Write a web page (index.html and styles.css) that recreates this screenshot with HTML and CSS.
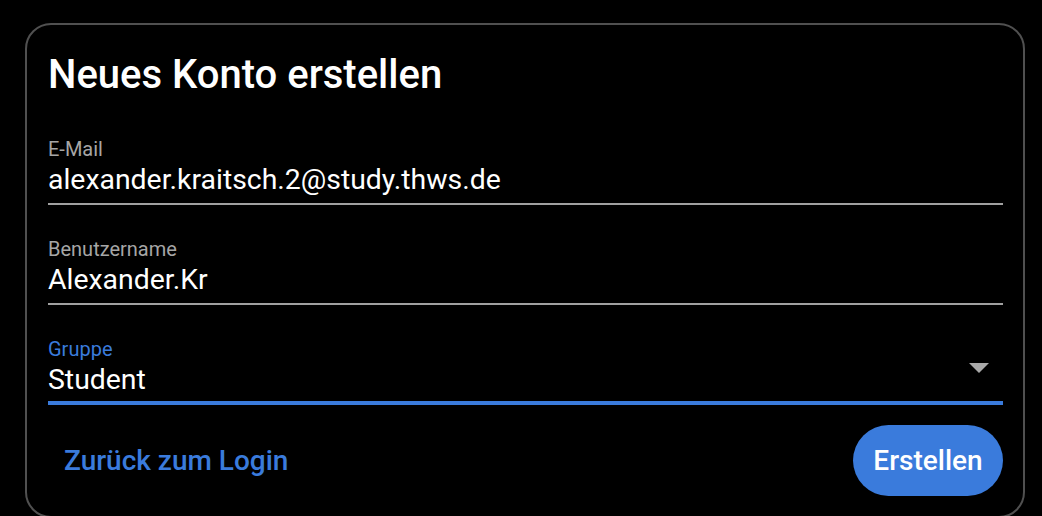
FILE: index.html
```html
<!DOCTYPE html>
<html lang="de">
<head>
<meta charset="utf-8">
<title>Neues Konto erstellen</title>
<link rel="stylesheet" href="styles.css">
</head>
<body>
<div class="card">
  <h1 class="title">Neues Konto erstellen</h1>
  <div class="field">
    <div class="label">E-Mail</div>
    <div class="value">alexander.kraitsch.2@study.thws.de</div>
  </div>
  <div class="field">
    <div class="label">Benutzername</div>
    <div class="value">Alexander.Kr</div>
  </div>
  <div class="field field-active">
    <div class="label">Gruppe</div>
    <div class="value select">Student
      <svg class="caret" width="20" height="10" viewBox="0 0 20 10"><path d="M0 0 L20 0 L10 10 Z" fill="#a9a9a9"/></svg>
    </div>
  </div>
  <div class="actions">
    <a class="link">Zurück zum Login</a>
    <button class="btn">Erstellen</button>
  </div>
</div>
</body>
</html>
```

FILE: styles.css
```css
html, body {
  margin: 0;
  background: #000;
}
body {
  padding: 23px 17px 0 25px;
  font-family: Roboto, "Noto Sans", sans-serif;
  color: #fff;
  overflow: hidden;
  height: 516px;
  box-sizing: border-box;
}
.card {
  border: 2px solid #505050;
  border-radius: 26px;
  padding: 26px 20px 0 21px;
  height: 495px;
  box-sizing: border-box;
}
.title {
  margin: 0 0 38px 0;
  font-size: 40px;
  font-weight: 500;
  line-height: 48px;
}
.field {
  border-bottom: 2px solid #a0a0a0;
  padding-bottom: 6px;
  margin-bottom: 32px;
}
.label {
  font-size: 20px;
  line-height: 24px;
  margin-bottom: 2px;
  color: #a6a6a6;
}
.value {
  font-size: 28.4px;
  line-height: 34px;
  color: #fff;
}
.select {
  display: flex;
  justify-content: space-between;
  align-items: flex-start;
}
.caret {
  margin-right: 14px;
  margin-top: 0;
}
.field-active {
  border-bottom: 4px solid #3a7bdc;
  padding-bottom: 4px;
  margin-bottom: 20px;
}
.field-active .label {
  color: #3a7bdc;
}
.actions {
  display: flex;
  justify-content: space-between;
  align-items: center;
}
.link {
  color: #3a7bdc;
  font-size: 28px;
  font-weight: 500;
  padding-left: 16px;
}
.btn {
  background: #3a7bdc;
  color: #fff;
  border: none;
  border-radius: 36px;
  font-family: Roboto, "Noto Sans", sans-serif;
  font-size: 28px;
  font-weight: 500;
  width: 150px;
  height: 71px;
  padding: 0;
}
```
